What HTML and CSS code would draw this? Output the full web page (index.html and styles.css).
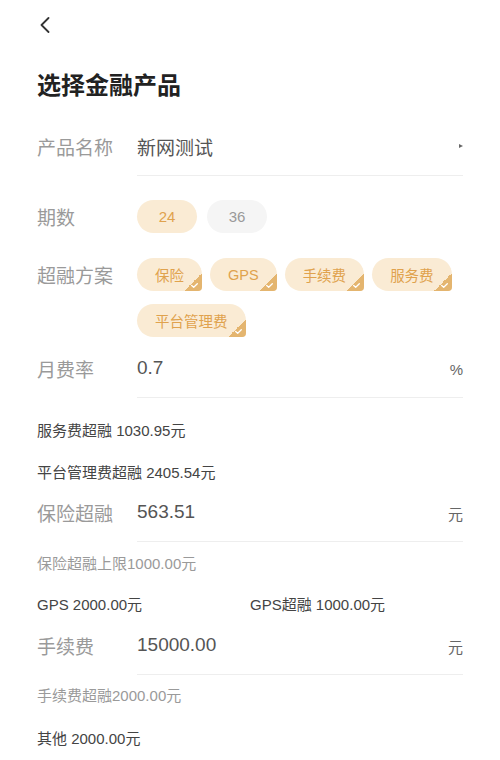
FILE: index.html
```html
<!DOCTYPE html>
<html lang="zh-CN">
<head>
<meta charset="utf-8">
<title>选择金融产品</title>
<link rel="stylesheet" href="styles.css">
</head>
<body>
<div class="page">
  <header class="nav">
    <svg class="back" width="10" height="16" viewBox="0 0 10 16"><polyline points="8.5,1 1.5,8 8.5,15" fill="none" stroke="#333" stroke-width="1.8" stroke-linecap="round" stroke-linejoin="round"/></svg>
  </header>
  <h1 class="title">选择金融产品</h1>

  <div class="field">
    <div class="label">产品名称</div>
    <div class="value"><span>新网测试</span><span class="tri"></span></div>
  </div>

  <div class="chip-field period">
    <div class="label chip-label">期数</div>
    <div class="chips period-chips">
      <span class="chip num">24</span>
      <span class="chip num off">36</span>
    </div>
  </div>

  <div class="chip-field plan">
    <div class="label chip-label">超融方案</div>
    <div class="chips">
      <span class="chip on">保险<svg class="check" viewBox="0 0 7 5"><polyline points="0.7,2.4 2.7,4.2 6.3,0.8"/></svg></span>
      <span class="chip on">GPS<svg class="check" viewBox="0 0 7 5"><polyline points="0.7,2.4 2.7,4.2 6.3,0.8"/></svg></span>
      <span class="chip on">手续费<svg class="check" viewBox="0 0 7 5"><polyline points="0.7,2.4 2.7,4.2 6.3,0.8"/></svg></span>
      <span class="chip on">服务费<svg class="check" viewBox="0 0 7 5"><polyline points="0.7,2.4 2.7,4.2 6.3,0.8"/></svg></span>
      <span class="chip on">平台管理费<svg class="check" viewBox="0 0 7 5"><polyline points="0.7,2.4 2.7,4.2 6.3,0.8"/></svg></span>
    </div>
  </div>

  <div class="field rate">
    <div class="label">月费率</div>
    <div class="value"><span>0.7</span><span class="unit">%</span></div>
  </div>

  <p class="detail first">服务费超融 1030.95元</p>
  <p class="detail">平台管理费超融 2405.54元</p>

  <div class="field insure">
    <div class="label">保险超融</div>
    <div class="value"><span>563.51</span><span class="unit">元</span></div>
  </div>
  <p class="hint">保险超融上限1000.00元</p>

  <div class="detail-grid">
    <p class="detail-cell">GPS 2000.00元</p>
    <p class="detail-cell">GPS超融 1000.00元</p>
  </div>

  <div class="field fee">
    <div class="label">手续费</div>
    <div class="value"><span>15000.00</span><span class="unit">元</span></div>
  </div>
  <p class="hint fee-hint">手续费超融2000.00元</p>

  <p class="detail other">其他 2000.00元</p>
</div>
</body>
</html>
```

FILE: styles.css
```css
html, body {
  margin: 0;
  padding: 0;
  background: #fff;
}
body {
  font-family: "Liberation Sans", "Noto Sans CJK SC", sans-serif;
  color: #333;
}
.page {
  padding: 0 37px;
}
.nav {
  height: 48px;
  box-sizing: border-box;
  padding: 17px 0 0 3px;
}
.back {
  display: block;
}
.title {
  margin: 19px 0 0;
  font-size: 24px;
  line-height: 34px;
  font-weight: 700;
  color: #222;
  font-family: "Noto Sans CJK SC", sans-serif;
}
.field {
  display: flex;
  margin-top: 18px;
}
.label {
  width: 100px;
  flex: none;
  display: flex;
  align-items: center;
  font-size: 19px;
  color: #9a9a9a;
  margin-top: -2px;
}
.value {
  flex: 1;
  height: 56px;
  display: flex;
  align-items: center;
  justify-content: space-between;
  border-bottom: 1px solid #eee;
  font-size: 19px;
  color: #555;
}
.value > span:first-child {
  margin-top: -2px;
}
.tri {
  width: 0;
  height: 0;
  border-left: 4px solid #666;
  border-top: 2.5px solid transparent;
  border-bottom: 2.5px solid transparent;
  margin-top: -3px;
}
.unit {
  font-size: 15px;
  color: #666;
}
.chip-field {
  display: flex;
  align-items: flex-start;
  margin-top: 24px;
}
.chip-field.plan {
  margin-top: 25px;
}
.chip-label {
  height: 33px;
  margin-top: 0;
}
.chips {
  flex: 1;
  display: flex;
  flex-wrap: wrap;
  gap: 13px 8px;
}
.period-chips {
  gap: 10px;
}
.chip {
  position: relative;
  height: 33px;
  padding: 0 18px;
  display: flex;
  align-items: center;
  justify-content: center;
  border-radius: 17px;
  font-size: 14.5px;
  background: #faebd4;
  color: #e0a24d;
  overflow: hidden;
}
.chip.num {
  width: 60px;
  padding: 0;
  box-sizing: border-box;
  font-size: 15px;
}
.chip.off {
  background: #f5f5f5;
  color: #9a9a9a;
}
.chip.on {
  border-radius: 17px 17px 4px 17px;
}
.chip.on::after {
  content: "";
  position: absolute;
  right: 0;
  bottom: 0;
  width: 18px;
  height: 18px;
  background: linear-gradient(135deg, transparent 50%, #e4b56f 50%);
}
.check {
  position: absolute;
  right: 4px;
  bottom: 3px;
  width: 7px;
  height: 5px;
  z-index: 1;
  fill: none;
  stroke: #fff;
  stroke-width: 1.3;
  stroke-linecap: round;
  stroke-linejoin: round;
}
.field.rate {
  margin-top: 4px;
}
.detail, .hint, .detail-cell {
  margin: 22px 0 0;
  font-size: 15px;
  line-height: 20px;
  color: #444;
}
.detail.first {
  margin-top: 23px;
}
.field.insure {
  margin-top: 2px;
}
.hint {
  margin-top: 12px;
  color: #9a9a9a;
}
.detail-grid {
  display: grid;
  grid-template-columns: 1fr 1fr;
  margin-top: 21px;
}
.detail-cell {
  margin: 0;
}
.field.fee {
  margin-top: 3px;
}
.hint.fee-hint {
  margin-top: 11px;
}
.detail.other {
  margin-top: 23px;
}
```
